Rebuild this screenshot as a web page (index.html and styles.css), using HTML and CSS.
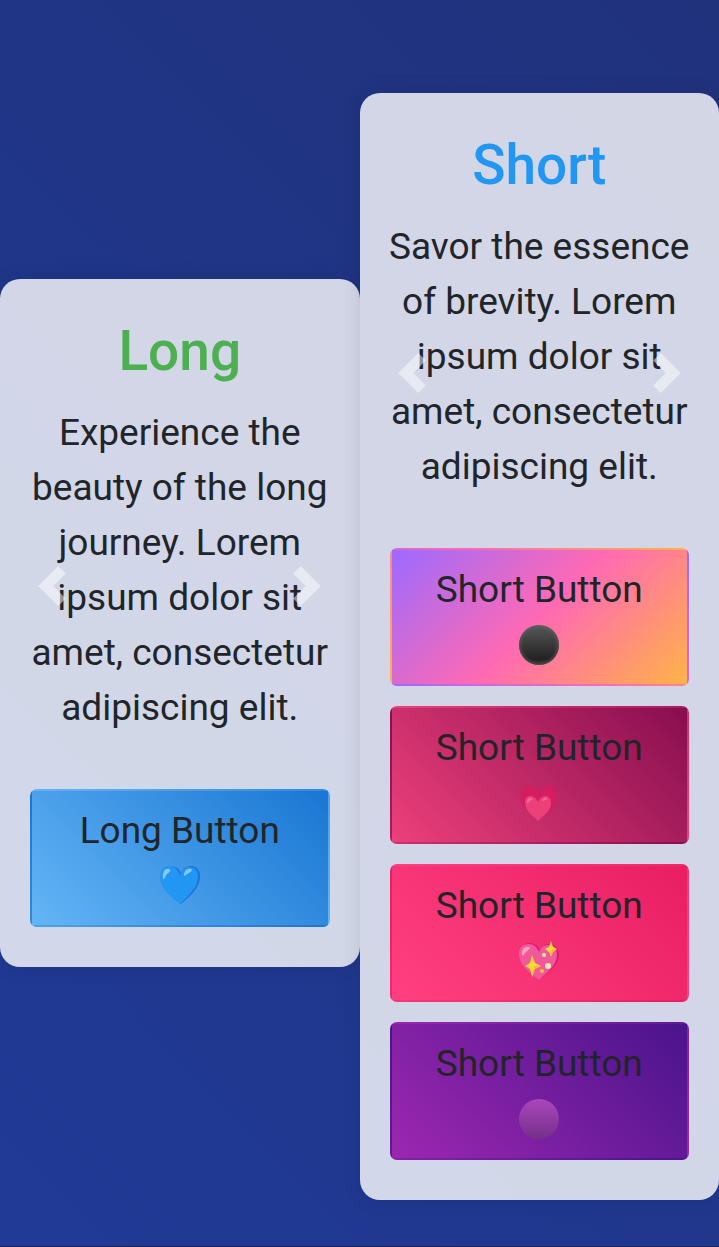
FILE: index.html
```html
<!DOCTYPE html>
<html lang="en">
<head>
<meta charset="utf-8">
<meta name="viewport" content="width=device-width, initial-scale=1">
<title>Long and Short</title>
<link rel="stylesheet" href="styles.css">
</head>
<body>
<main class="page">
  <section class="card">
    <div class="carousel">
      <h2 class="title title-long">Long</h2>
      <p class="text">Experience the beauty of the long journey. Lorem ipsum dolor sit amet, consectetur adipiscing elit.</p>
      <button class="control control-prev" type="button" aria-label="Previous"><svg class="chevron" viewBox="0 0 8 8"><path d="M5.25 0l-4 4 4 4 1.5-1.5-2.5-2.5 2.5-2.5-1.5-1.5z"/></svg></button>
      <button class="control control-next" type="button" aria-label="Next"><svg class="chevron" viewBox="0 0 8 8"><path d="M2.75 0l-1.5 1.5 2.5 2.5-2.5 2.5 1.5 1.5 4-4-4-4z"/></svg></button>
    </div>
    <div class="actions">
      <button class="btn btn-blue" type="button">Long Button
        <span class="icon-row"><svg class="icon" viewBox="0 0 42 42" aria-hidden="true">
          <path fill="#1976d2" d="M22 39C15 33 3 24 2 13 1 5 6 1 12 1c5 0 8 3 10 7 2-4 5-7 10-7 6 0 10 5 9 12-1 11-12 20-19 26z"/>
          <path fill="#2196f3" d="M21 39C14 33 1 24 1 12 1 5 5 1 11 1c5 0 8 4 10 9 2-5 5-8 10-8 5 0 8 4 8 10 0 11-11 20-18 27z"/>
          <path fill="#82c8ff" d="M4 14C3 7 6 3 10 4c3 1 0 4-2 5-2 2-2 6-4 5zM25 10c0-4 4-7 7-6 2 1 0 3-2 4s-5 4-5 2z"/>
        </svg></span>
      </button>
    </div>
  </section>

  <section class="card card-short">
    <div class="carousel">
      <h2 class="title title-short">Short</h2>
      <p class="text">Savor the essence of brevity. Lorem ipsum dolor sit amet, consectetur adipiscing elit.</p>
      <button class="control control-prev" type="button" aria-label="Previous"><svg class="chevron" viewBox="0 0 8 8"><path d="M5.25 0l-4 4 4 4 1.5-1.5-2.5-2.5 2.5-2.5-1.5-1.5z"/></svg></button>
      <button class="control control-next" type="button" aria-label="Next"><svg class="chevron" viewBox="0 0 8 8"><path d="M2.75 0l-1.5 1.5 2.5 2.5-2.5 2.5 1.5 1.5 4-4-4-4z"/></svg></button>
    </div>
    <div class="actions">
      <button class="btn btn-sunset" type="button">Short Button
        <span class="icon-row"><svg class="icon" viewBox="0 0 42 42" aria-hidden="true">
          <defs>
            <linearGradient id="dark" x1="0" y1="0" x2="0" y2="1"><stop offset="0" stop-color="#585858"/><stop offset=".85" stop-color="#232323"/><stop offset="1" stop-color="#303030"/></linearGradient>
            <radialGradient id="rim"><stop offset=".8" stop-color="#666" stop-opacity="0"/><stop offset="1" stop-color="#666" stop-opacity=".5"/></radialGradient>
          </defs>
          <circle cx="21" cy="21" r="20" fill="url(#dark)"/><circle cx="21" cy="21" r="20" fill="url(#rim)"/>
        </svg></span>
      </button>
      <button class="btn btn-berry" type="button">Short Button
        <span class="icon-row"><svg class="icon" viewBox="0 0 42 42" aria-hidden="true">
          <path fill="#d01c60" opacity=".45" d="M21 39C14 33 1 24 1 12 1 5 5 2 11 2c5 0 8 3 10 7 2-4 5-7 10-7 6 0 10 3 10 10 0 12-13 21-20 27z"/>
          <path fill="#d81b60" opacity=".8" d="M21 38C15 32 4 24 4 14 4 8 7 5 12 5c4 0 7 3 9 7 2-4 5-7 10-7 4 0 7 3 7 9 0 10-11 18-17 24z"/>
          <path fill="#ec407a" d="M20 39C15 34 7 29 7 21c0-5 2-7 5-7 4 0 6 2 8 6 2-4 4-6 7-6 4 0 6 3 6 7 0 8-8 13-13 18z"/>
          <path fill="#f26a9a" d="M9 21c-1-4 3-6 5-5 2 2-2 2-3 4-1 1-1 2-2 1zM24 19c0-3 4-4 5-3 1 2-3 2-5 3z"/>
        </svg></span>
      </button>
      <button class="btn btn-rose" type="button">Short Button
        <span class="icon-row"><svg class="icon" viewBox="0 0 42 42" aria-hidden="true">
          <path fill="#d81b70" d="M22 39C14 33 2 25 2 14 2 7 6 3 12 3c5 0 8 3 10 7 2-4 5-6 9-6 6 0 10 4 10 11 0 11-12 18-19 24z"/>
          <path fill="#f0589a" d="M21 40C14 34 1 26 1 14 1 7 5 4 11 4c5 0 8 3 10 8 2-5 5-7 9-7 6 0 9 4 9 10 0 11-11 18-18 25z"/>
          <path fill="#ff9fbd" d="M4 15c-1-6 3-9 7-8 3 1-1 3-3 5-2 1-2 5-4 3z"/>
          <path fill="#fdd835" d="M14 15l3 8 6 3-6 3-3 8-2-8-5-3 5-3zM33 1l2 6 4 2-4 3-2 5-2-5-4-3 4-2z"/>
          <path fill="#ffb52e" d="M16 26h7l-6 3-3 8zM34 9h5l-4 3-2 5z"/>
          <circle cx="26" cy="15" r="2" fill="#fff09a"/><circle cx="30" cy="26" r="3" fill="#ffeeb0"/><circle cx="24" cy="31" r="2" fill="#fbbf3c"/>
        </svg></span>
      </button>
      <button class="btn btn-purple" type="button">Short Button
        <span class="icon-row"><svg class="icon" viewBox="0 0 42 42" aria-hidden="true">
          <defs><linearGradient id="violet" x1="0" y1="0" x2="0" y2="1"><stop offset="0" stop-color="#ab47bc"/><stop offset="1" stop-color="#73308a"/></linearGradient></defs>
          <circle cx="21" cy="21" r="20" fill="url(#violet)"/>
        </svg></span>
      </button>
    </div>
  </section>
</main>
</body>
</html>
```

FILE: styles.css
```css
* {
  box-sizing: border-box;
}

body {
  margin: 0;
  color: #212529;
  font-family: Roboto, "Liberation Sans", sans-serif;
  font-size: 37px;
  line-height: 55px;
  text-align: center;
}

.page {
  display: grid;
  grid-template-columns: 1fr 1fr;
  align-items: center;
  min-height: 100vh;
  border-bottom: 1px solid #1a2350;
  background: linear-gradient(45deg, #203a96, #20327c);
}

.card {
  padding: 40px 30px;
  border-radius: 20px;
  background: rgba(255, 255, 255, 0.8);
  box-shadow: 0 0 20px rgba(0, 0, 0, 0.1);
}

.card-short {
  margin-top: 47px;
}

.carousel {
  position: relative;
}

.title {
  margin: 0 0 22px;
  font-size: 55px;
  font-weight: 500;
  line-height: 64px;
}

.title-long {
  color: #4caf50;
}

.title-short {
  color: #2196f3;
}

.text {
  margin: 0 -4px 54px;
}

.control {
  position: absolute;
  top: 0;
  bottom: -118px;
  display: flex;
  align-items: center;
  justify-content: center;
  width: 15%;
  padding: 0;
  border: 0;
  background: none;
  opacity: 0.5;
  pointer-events: none;
}

.control-prev {
  left: 0;
}

.control-next {
  right: 0;
}

.chevron {
  flex: none;
  width: 40px;
  height: 40px;
  fill: #fff;
}

.actions {
  display: grid;
  gap: 20px;
}

.btn {
  padding: 12px;
  border: 2px solid transparent;
  border-radius: 7px;
  color: #212529;
  font: inherit;
  cursor: pointer;
}

.icon-row {
  display: flex;
  align-items: center;
  justify-content: center;
  height: 55px;
}

.icon {
  width: 42px;
  height: 42px;
}

.btn-blue {
  background-image: linear-gradient(45deg, #64b5f6, #1976d2);
}

.btn-sunset {
  background-image: linear-gradient(135deg, #9b6bff, #ff69b4, #ffb347);
}

.btn-berry {
  background-image: linear-gradient(45deg, #ec407a, #880e4f);
}

.btn-rose {
  background-image: linear-gradient(45deg, #ff4081, #e91e63);
}

.btn-purple {
  background-image: linear-gradient(45deg, #9c27b0, #4a148c);
}
```
